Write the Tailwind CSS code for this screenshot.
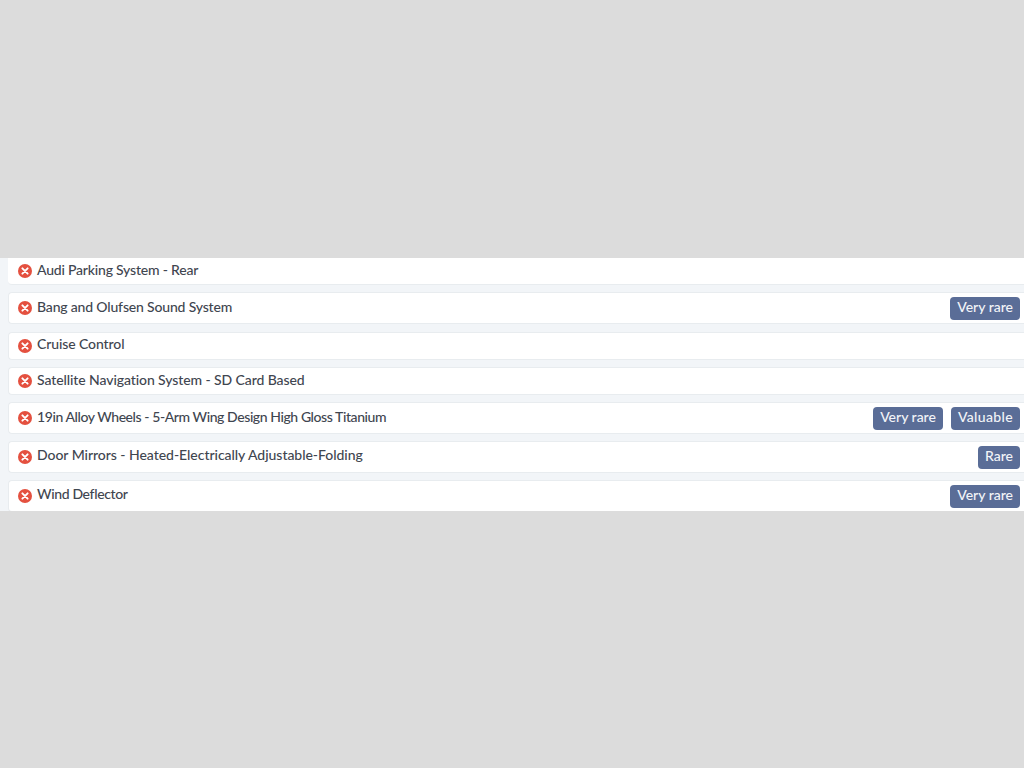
<!DOCTYPE html>
<html lang="en">

<head>
  <meta charset="UTF-8">
  <meta name="viewport" content="width=device-width, initial-scale=1.0">
  <title>Equipment</title>
  <script src="https://cdn.jsdelivr.net/npm/@tailwindcss/browser@4"></script>
</head>

<body class="bg-[#dcdcdc] h-[768px] overflow-hidden pt-[258px] font-['Lato',sans-serif] font-medium text-[14px] text-[#3f4650]">
  <!-- Equipment list -->
  <div class="h-[253px] bg-[#f2f5f8] pl-2 overflow-hidden">
    <div class="flex items-center h-[27px] bg-white border-b border-[#e8ecef] rounded-bl pl-[10px] pr-1 mb-[7px]">
      <svg class="w-[14px] h-[14px] mr-[5px] shrink-0" viewBox="0 0 16 16"><circle cx="8" cy="8" r="8" fill="#e4503f"/><path d="M5 5l6 6M11 5l-6 6" stroke="#fff" stroke-width="2.2" stroke-linecap="round"/></svg>
      <span class="-mt-1 tracking-[-0.2px]">Audi Parking System - Rear</span>
    </div>

    <div class="flex items-center h-[32px] bg-white border border-r-0 border-[#e8ecef] rounded-l pl-[9px] pr-1 mb-2">
      <svg class="w-[14px] h-[14px] mr-[5px] shrink-0" viewBox="0 0 16 16"><circle cx="8" cy="8" r="8" fill="#e4503f"/><path d="M5 5l6 6M11 5l-6 6" stroke="#fff" stroke-width="2.2" stroke-linecap="round"/></svg>
      <span class="-mt-1 tracking-[-0.17px]">Bang and Olufsen Sound System</span>
      <span class="ml-auto h-[23px] leading-[20px] px-[7px] bg-[#5a6d97] text-[#f2f4f8] rounded">Very rare</span>
    </div>

    <div class="flex items-center h-[28px] bg-white border border-r-0 border-[#e8ecef] rounded-l pl-[9px] pr-1 mb-[7px]">
      <svg class="w-[14px] h-[14px] mr-[5px] shrink-0" viewBox="0 0 16 16"><circle cx="8" cy="8" r="8" fill="#e4503f"/><path d="M5 5l6 6M11 5l-6 6" stroke="#fff" stroke-width="2.2" stroke-linecap="round"/></svg>
      <span class="-mt-1.5 tracking-[-0.1px]">Cruise Control</span>
    </div>

    <div class="flex items-center h-[28px] bg-white border border-r-0 border-[#e8ecef] rounded-l pl-[9px] pr-1 mb-[7px]">
      <svg class="w-[14px] h-[14px] mr-[5px] shrink-0" viewBox="0 0 16 16"><circle cx="8" cy="8" r="8" fill="#e4503f"/><path d="M5 5l6 6M11 5l-6 6" stroke="#fff" stroke-width="2.2" stroke-linecap="round"/></svg>
      <span class="-mt-1 tracking-[-0.09px]">Satellite Navigation System - SD Card Based</span>
    </div>

    <div class="flex items-center h-[32px] bg-white border border-r-0 border-[#e8ecef] rounded-l pl-[9px] pr-1 mb-[7px]">
      <svg class="w-[14px] h-[14px] mr-[5px] shrink-0" viewBox="0 0 16 16"><circle cx="8" cy="8" r="8" fill="#e4503f"/><path d="M5 5l6 6M11 5l-6 6" stroke="#fff" stroke-width="2.2" stroke-linecap="round"/></svg>
      <span class="-mt-1 tracking-[-0.42px]">19in Alloy Wheels - 5-Arm Wing Design High Gloss Titanium</span>
      <span class="ml-auto h-[23px] leading-[20px] px-[7px] bg-[#5a6d97] text-[#f2f4f8] rounded">Very rare</span>
      <span class="ml-2 h-[23px] leading-[20px] px-[7px] tracking-[0.35px] bg-[#5a6d97] text-[#f2f4f8] rounded">Valuable</span>
    </div>

    <div class="flex items-center h-[32px] bg-white border border-r-0 border-[#e8ecef] rounded-l pl-[9px] pr-1 mb-[7px]">
      <svg class="w-[14px] h-[14px] mr-[5px] shrink-0" viewBox="0 0 16 16"><circle cx="8" cy="8" r="8" fill="#e4503f"/><path d="M5 5l6 6M11 5l-6 6" stroke="#fff" stroke-width="2.2" stroke-linecap="round"/></svg>
      <span class="-mt-1.5 tracking-[-0.04px]">Door Mirrors - Heated-Electrically Adjustable-Folding</span>
      <span class="ml-auto h-[23px] leading-[20px] px-[7px] bg-[#5a6d97] text-[#f2f4f8] rounded">Rare</span>
    </div>

    <div class="flex items-center h-[32px] bg-white border border-r-0 border-[#e8ecef] rounded-l pl-[9px] pr-1">
      <svg class="w-[14px] h-[14px] mr-[5px] shrink-0" viewBox="0 0 16 16"><circle cx="8" cy="8" r="8" fill="#e4503f"/><path d="M5 5l6 6M11 5l-6 6" stroke="#fff" stroke-width="2.2" stroke-linecap="round"/></svg>
      <span class="-mt-1.5 tracking-[-0.35px]">Wind Deflector</span>
      <span class="ml-auto h-[23px] leading-[20px] px-[7px] bg-[#5a6d97] text-[#f2f4f8] rounded">Very rare</span>
    </div>
  </div>
</body>

</html>
